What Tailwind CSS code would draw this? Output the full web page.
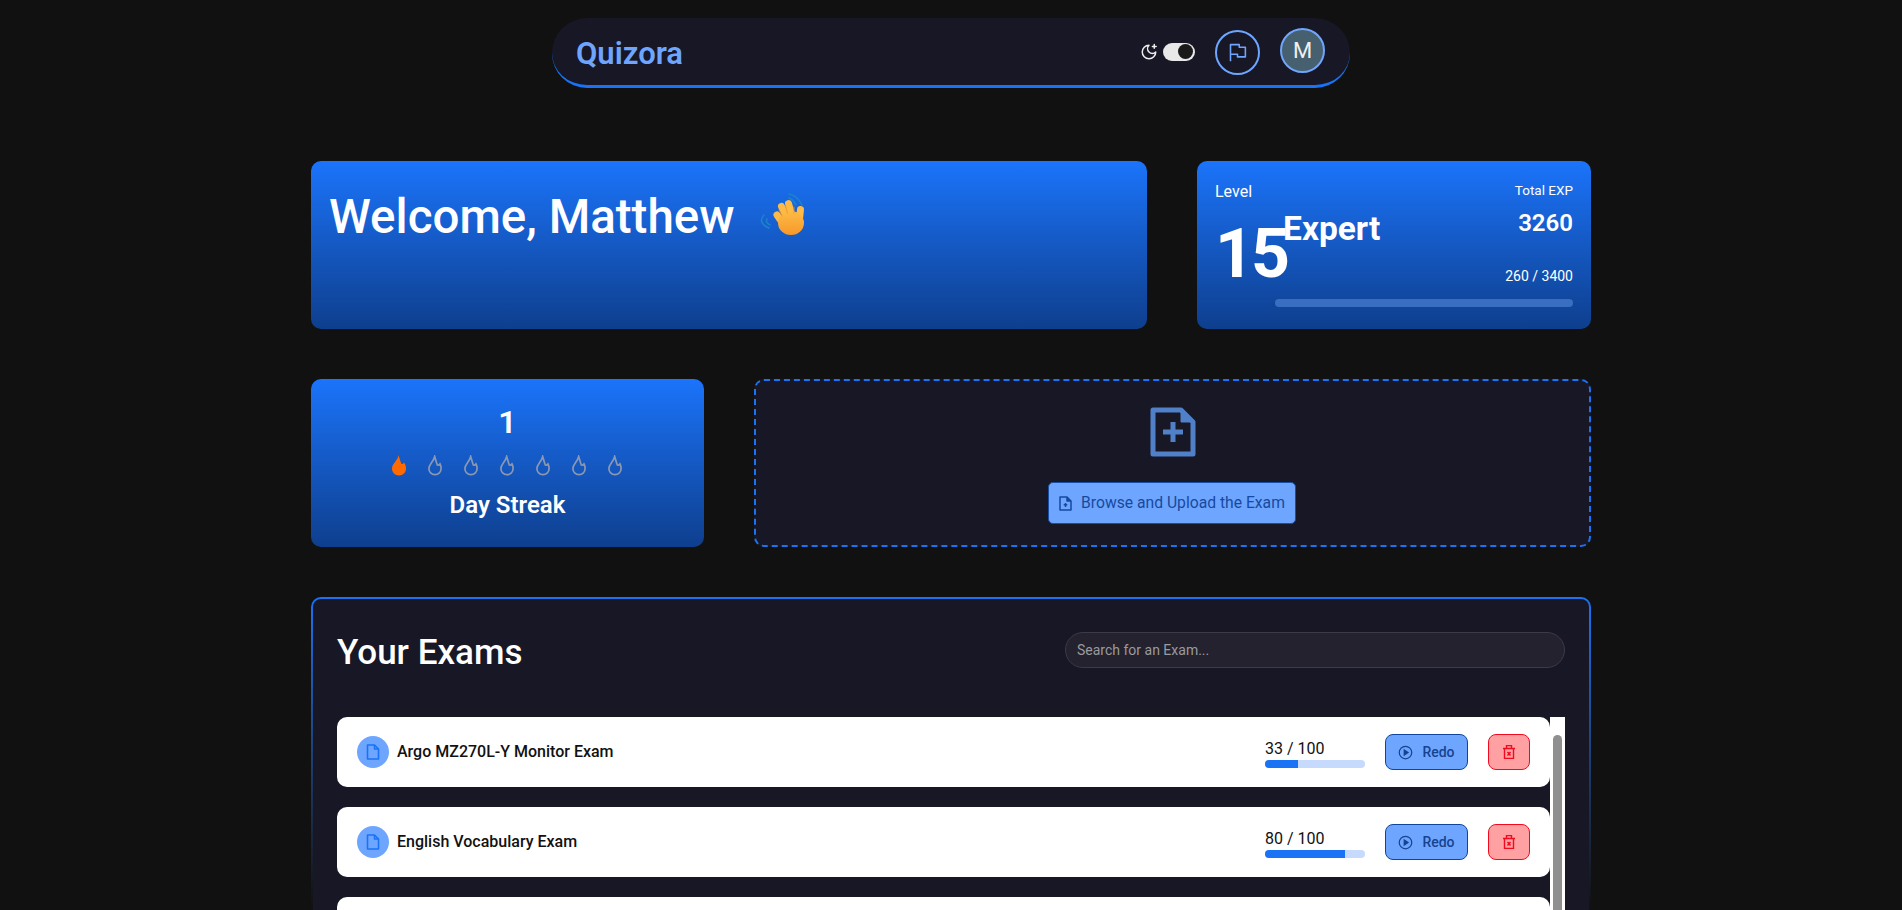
<!DOCTYPE html>
<html lang="en">
<head>
  <meta charset="UTF-8">
  <meta name="viewport" content="width=device-width, initial-scale=1.0">
  <title>Quizora</title>
  <script src="https://cdn.jsdelivr.net/npm/@tailwindcss/browser@4"></script>
</head>
<body class="h-screen overflow-hidden bg-[#111111] pt-[18px] font-['Roboto',sans-serif] text-white">

  <!-- navbar -->
  <nav class="mx-auto flex h-[70px] w-[798px] items-center justify-between rounded-[35px] border-b-[3px] border-[#1a73f5] bg-[#181726] pl-[24px] pr-[25px]">
    <span class="mt-[6px] text-[31px] font-semibold text-[#6ea6ff]">Quizora</span>
    <div class="flex items-center">
      <svg class="h-[18px] w-[18px] text-[#eeeeee]" viewBox="0 0 24 24" fill="none" stroke="currentColor" stroke-width="2" stroke-linecap="round" stroke-linejoin="round"><path d="M12 3a6 6 0 0 0 9 9 9 9 0 1 1-9-9Z"/><path d="M19 2v5M16.500 4.500h5"/></svg>
      <div class="ml-[5px] flex h-[18px] w-[32px] items-center justify-end rounded-full bg-[#e8e8e8] pr-[2px]">
        <div class="h-[15px] w-[15px] rounded-full bg-[#1a1a1a]"></div>
      </div>
      <button class="ml-[20px] mt-[2px] flex h-[45px] w-[45px] items-center justify-center rounded-full border-2 border-[#6ea6ff]">
        <svg class="h-[21px] w-[21px] text-[#6ea6ff]" viewBox="0 0 24 24" fill="none" stroke="currentColor" stroke-width="1.800" stroke-linejoin="round"><path d="M4 22V3h10v3h7v11h-9v-3H4"/></svg>
      </button>
      <div class="ml-[20px] mb-[2px] flex h-[45px] w-[45px] items-center justify-center rounded-full border-2 border-[#6ea6ff] bg-[#46606f] text-[22px] text-[#f0f0f0]">M</div>
    </div>
  </nav>

  <main class="mx-auto mt-[73px] w-[1280px]">
    <div class="grid grid-cols-[393px_393px_394px] gap-[50px]">

      <!-- welcome -->
      <section class="col-span-2 h-[168px] rounded-[10px] bg-linear-to-b from-[#1b74fb] to-[#0e3f8e] px-[18px] pt-[20px]">
        <h1 class="flex items-center text-[47.5px] font-medium leading-[72px]">Welcome, Matthew
          <svg class="ml-[22px] mt-[6px] h-[60px] w-[60px]" viewBox="0 0 60 60" fill="none" stroke-linecap="round">
            <defs><linearGradient id="hand" x1="0" y1="0" x2="0" y2="1"><stop offset="0" stop-color="#fdbb45"/><stop offset="1" stop-color="#f7982a"/></linearGradient></defs>
            <path d="M32 4c5 1 10 5 13 11M32 8c3 1 5 3 7 7M7 25c-4 4-4 9 5 13M10 29c-1 2-1 4 3 6" stroke="#1c84c9" stroke-width="1.500"/>
            <path d="M29 38 20 25M33 34 24.500 16.500M37 33 31.500 13.500M42 34 43.500 19.500" stroke="#fdbb45" stroke-width="7"/>
            <ellipse cx="34" cy="33" rx="13" ry="12" fill="url(#hand)"/>
            <path d="M25 26 22 20M30.500 23 28.500 16M37 23 37 17" stroke="#e8922a" stroke-width=".8"/>
          </svg>
        </h1>
      </section>

      <!-- level -->
      <section class="relative h-[168px] rounded-[10px] bg-linear-to-b from-[#1b74fb] to-[#0e3f8e] px-[18px] pt-[20px]">
        <div class="flex items-start justify-between">
          <span class="text-[16px] leading-[22px]">Level</span>
          <span class="text-[13.5px] leading-[18px]">Total EXP</span>
        </div>
        <div class="flex items-start justify-between">
          <div class="flex items-start">
            <span class="mt-[11px] text-[68px] font-bold leading-[80px] tracking-[-3px]">15</span>
            <span class="-ml-[4px] mt-[7px] text-[33.500px] font-bold leading-[38px]">Expert</span>
          </div>
          <div class="flex flex-col items-end">
            <span class="mt-[6px] text-[24px] font-semibold leading-[28px]">3260</span>
            <span class="mt-[30px] text-[14px] leading-[18px]">260 / 3400</span>
          </div>
        </div>
        <div class="absolute bottom-[22px] right-[18px] h-[8px] w-[298px] rounded-full bg-[#3a6ec1]"></div>
      </section>

      <!-- streak -->
      <section class="flex h-[168px] flex-col items-center rounded-[10px] bg-linear-to-b from-[#1b74fb] to-[#0e3f8e] pt-[23px]">
        <span class="text-[32px] font-semibold leading-[40px]">1</span>
        <div class="mr-[2px] mt-[13px] flex gap-[22px]">
          <svg class="h-[21px] w-[14px]" viewBox="0 0 14 21" fill="#ff6a00"><path d="M6.500 0C7.500 3 8 5.500 9.500 9 10.500 9 11.500 8.500 12 7.500 13.500 9.500 14 11.500 14 13.500 14 17.500 11 20.500 7 20.500 3 20.500 0 17.500 0 13.500 0 8.500 6 5.500 6.500 0z"/></svg>
          <svg class="h-[21px] w-[14px]" viewBox="0 0 14 21" fill="none" stroke="#8c98b0" stroke-width="1.700"><path d="M6.700 1.500C7.500 4 8 6.500 9.300 10 10.500 10.300 11.500 9.800 12 9 12.800 10.500 13.100 12 13.100 13.500 13.100 17 10.500 19.700 7 19.700 3.500 19.700 .9 17 .9 13.500 .9 9 5.700 6.500 6.700 1.500z"/></svg>
          <svg class="h-[21px] w-[14px]" viewBox="0 0 14 21" fill="none" stroke="#8c98b0" stroke-width="1.700"><path d="M6.700 1.500C7.500 4 8 6.500 9.300 10 10.500 10.300 11.500 9.800 12 9 12.800 10.500 13.100 12 13.100 13.500 13.100 17 10.500 19.700 7 19.700 3.500 19.700 .9 17 .9 13.500 .9 9 5.700 6.500 6.700 1.500z"/></svg>
          <svg class="h-[21px] w-[14px]" viewBox="0 0 14 21" fill="none" stroke="#8c98b0" stroke-width="1.700"><path d="M6.700 1.500C7.500 4 8 6.500 9.300 10 10.500 10.300 11.500 9.800 12 9 12.800 10.500 13.100 12 13.100 13.500 13.100 17 10.500 19.700 7 19.700 3.500 19.700 .9 17 .9 13.500 .9 9 5.700 6.500 6.700 1.500z"/></svg>
          <svg class="h-[21px] w-[14px]" viewBox="0 0 14 21" fill="none" stroke="#8c98b0" stroke-width="1.700"><path d="M6.700 1.500C7.500 4 8 6.500 9.300 10 10.500 10.300 11.500 9.800 12 9 12.800 10.500 13.100 12 13.100 13.500 13.100 17 10.500 19.700 7 19.700 3.500 19.700 .9 17 .9 13.500 .9 9 5.700 6.500 6.700 1.500z"/></svg>
          <svg class="h-[21px] w-[14px]" viewBox="0 0 14 21" fill="none" stroke="#8c98b0" stroke-width="1.700"><path d="M6.700 1.500C7.500 4 8 6.500 9.300 10 10.500 10.300 11.500 9.800 12 9 12.800 10.500 13.100 12 13.100 13.500 13.100 17 10.500 19.700 7 19.700 3.500 19.700 .9 17 .9 13.500 .9 9 5.700 6.500 6.700 1.500z"/></svg>
          <svg class="h-[21px] w-[14px]" viewBox="0 0 14 21" fill="none" stroke="#8c98b0" stroke-width="1.700"><path d="M6.700 1.500C7.500 4 8 6.500 9.300 10 10.500 10.300 11.500 9.800 12 9 12.800 10.500 13.100 12 13.100 13.500 13.100 17 10.500 19.700 7 19.700 3.500 19.700 .9 17 .9 13.500 .9 9 5.700 6.500 6.700 1.500z"/></svg>
        </div>
        <span class="mt-[14px] text-[24px] font-semibold leading-[30px]">Day Streak</span>
      </section>

      <!-- upload -->
      <section class="col-span-2 flex h-[168px] flex-col items-center rounded-[10px] border-2 border-dashed border-[#1a73f5] bg-[#181726] pt-[26px]">
        <svg class="h-[50px] w-[46px] text-[#5080c8]" viewBox="0 0 46 50" fill="none" stroke="currentColor" stroke-width="5" stroke-linejoin="round"><path d="M3 3h28l12 12v32H3z"/><path d="M31 1 45 15H31z" fill="currentColor" stroke-width="1"/><path d="M23 15v20M13 25h20" stroke-linejoin="miter"/></svg>
        <button class="mr-[1px] mt-[25px] flex h-[42px] w-[248px] items-center gap-[9px] rounded-[5px] border border-[#1a4fa6] bg-[#6ea6ff] pl-[10px] text-[15.700px] text-[#174a9e]">
          <svg class="h-[15px] w-[13px]" viewBox="0 0 13 15" fill="none" stroke="currentColor" stroke-width="1.500" stroke-linejoin="round"><path d="M1 1h7l4 4v9H1z"/><path d="M8 1v4h4" fill="currentColor"/><path d="M6.500 11V7M4.700 8.700h3.600"/></svg>
          Browse and Upload the Exam
        </button>
      </section>
    </div>

    <!-- exams panel, runs off the bottom of the window -->
    <div class="mt-[50px] h-[313px] rounded-t-[10px] bg-linear-to-b from-[#1a73f5] to-[#111111] p-[2px] pb-0">
      <section class="h-full overflow-hidden rounded-t-[8px] bg-[#181726] px-[24px] pt-[33px]">
        <div class="flex h-[36px] items-center justify-between">
          <h2 class="mt-[6px] text-[35px] font-medium">Your Exams</h2>
          <input type="text" placeholder="Search for an Exam..." class="h-[36px] w-[500px] rounded-full border border-[#3d3b48] bg-[#24222e] px-[11px] text-[14px] text-white placeholder:text-[#9a9a9f] outline-none">
        </div>
        <div class="mt-[49px] flex">
          <div class="flex flex-1 flex-col gap-[20px]">

            <div class="flex h-[70px] items-center rounded-[10px] bg-white pl-[20px] pr-[20px] text-[#111111]">
              <div class="flex h-[32px] w-[32px] items-center justify-center rounded-full bg-[#6ea6ff]">
                <svg class="h-[16px] w-[14px] text-[#1a73f5]" viewBox="0 0 14 16" fill="none" stroke="currentColor" stroke-width="1.600" stroke-linejoin="round"><path d="M1.500 1h7l4 4v10h-11z"/><path d="M8.500 1v4h4"/></svg>
              </div>
              <span class="ml-[8px] flex-1 text-[16px] font-medium">Argo MZ270L-Y Monitor Exam</span>
              <div class="mt-[3px] w-[100px]">
                <div class="text-[16px] leading-[20px]">33 / 100</div>
                <div class="mt-[1px] h-[8px] rounded-full bg-[#c5dafc]"><div class="h-full rounded-l-full bg-[#1a73f5]" style="width:33%"></div></div>
              </div>
              <button class="ml-[20px] flex h-[36px] w-[83px] items-center justify-center gap-[9px] rounded-[8px] border border-[#0f469c] bg-[#6ea6ff] text-[14px] font-medium text-[#16438f]">
                <svg class="h-[15px] w-[15px]" viewBox="0 0 24 24" fill="none" stroke="currentColor" stroke-width="2"><circle cx="12" cy="12" r="10"/><path d="M10 8l6 4-6 4z" fill="currentColor"/></svg>
                Redo
              </button>
              <button class="ml-[20px] flex h-[36px] w-[42px] items-center justify-center rounded-[8px] border border-[#f00b1e] bg-[#ffa0a3] text-[#f00b1e]">
                <svg class="h-[14px] w-[14px]" viewBox="0 0 14 14" fill="none" stroke="currentColor" stroke-width="1.400"><path d="M1 3.500h12M2.500 3.500v10h9v-10M4.500 3.500v-3h5v3M5.500 7l3 3.500M8.500 7l-3 3.500"/></svg>
              </button>
            </div>

            <div class="flex h-[70px] items-center rounded-[10px] bg-white pl-[20px] pr-[20px] text-[#111111]">
              <div class="flex h-[32px] w-[32px] items-center justify-center rounded-full bg-[#6ea6ff]">
                <svg class="h-[16px] w-[14px] text-[#1a73f5]" viewBox="0 0 14 16" fill="none" stroke="currentColor" stroke-width="1.600" stroke-linejoin="round"><path d="M1.500 1h7l4 4v10h-11z"/><path d="M8.500 1v4h4"/></svg>
              </div>
              <span class="ml-[8px] flex-1 text-[16px] font-medium">English Vocabulary Exam</span>
              <div class="mt-[3px] w-[100px]">
                <div class="text-[16px] leading-[20px]">80 / 100</div>
                <div class="mt-[1px] h-[8px] rounded-full bg-[#c5dafc]"><div class="h-full rounded-l-full bg-[#1a73f5]" style="width:80%"></div></div>
              </div>
              <button class="ml-[20px] flex h-[36px] w-[83px] items-center justify-center gap-[9px] rounded-[8px] border border-[#0f469c] bg-[#6ea6ff] text-[14px] font-medium text-[#16438f]">
                <svg class="h-[15px] w-[15px]" viewBox="0 0 24 24" fill="none" stroke="currentColor" stroke-width="2"><circle cx="12" cy="12" r="10"/><path d="M10 8l6 4-6 4z" fill="currentColor"/></svg>
                Redo
              </button>
              <button class="ml-[20px] flex h-[36px] w-[42px] items-center justify-center rounded-[8px] border border-[#f00b1e] bg-[#ffa0a3] text-[#f00b1e]">
                <svg class="h-[14px] w-[14px]" viewBox="0 0 14 14" fill="none" stroke="currentColor" stroke-width="1.400"><path d="M1 3.500h12M2.500 3.500v10h9v-10M4.500 3.500v-3h5v3M5.500 7l3 3.500M8.500 7l-3 3.500"/></svg>
              </button>
            </div>

            <div class="h-[70px] rounded-[10px] bg-white"></div>
          </div>

          <!-- scrollbar -->
          <div class="w-[15px] self-stretch bg-white pl-[3px] pr-[3px] pt-[18px]">
            <div class="h-full rounded-full bg-[#8f8f8f]"></div>
          </div>
        </div>
      </section>
    </div>
  </main>
</body>
</html>
